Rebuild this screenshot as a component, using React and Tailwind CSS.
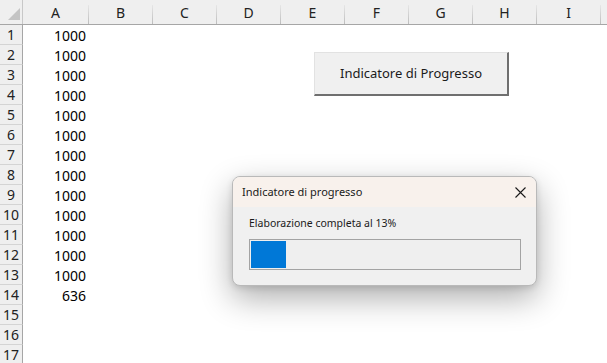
const COLS = [
  { id: 'A', w: 'w-[66px]' },
  { id: 'B', w: 'w-[64px]' },
  { id: 'C', w: 'w-[64px]' },
  { id: 'D', w: 'w-[64px]' },
  { id: 'E', w: 'w-[64px]' },
  { id: 'F', w: 'w-[64px]' },
  { id: 'G', w: 'w-[64px]' },
  { id: 'H', w: 'w-[64px]' },
  { id: 'I', w: 'w-[64px]' },
]

const VALUES = [1000, 1000, 1000, 1000, 1000, 1000, 1000, 1000, 1000, 1000, 1000, 1000, 1000, 636, null, null, null]

const PROGRESS = 13

function ColumnHeader() {
  return (
    <div className="flex h-[25px] bg-[#efefef] border-b border-[#a6a6a6] shrink-0">
      <div className="w-[23px] h-full border-r border-[#c8c8c8] relative shrink-0">
        {/* corner select-all triangle */}
        <svg className="absolute left-[8px] top-[8px]" width="12" height="12" viewBox="0 0 12 12">
          <polygon points="12,0 12,12 0,12" fill="#c4c4c4" />
        </svg>
      </div>
      {COLS.map(c => (
        <div key={c.id} className={`${c.w} h-full flex shrink-0`}>
          <div className="flex-1 flex items-center justify-center text-[14px] text-[#222] pt-[1px]">{c.id}</div>
          <div className="w-px mt-[5px] bg-gradient-to-b from-[#e6e6e6] to-[#bdbdbd]" />
        </div>
      ))}
      <div className="flex-1" />
    </div>
  )
}

function Row({ n, value }) {
  return (
    <div className="flex h-[20px] shrink-0">
      <div className="w-[23px] h-full bg-[#efefef] border-r border-b border-r-[#a6a6a6] border-b-[#d4d4d4] flex items-center justify-center text-[14px] text-[#222] shrink-0">
        {n}
      </div>
      <div className="w-[66px] h-full flex items-center justify-end pr-[3px] text-[14px] text-black shrink-0">
        {value}
      </div>
      <div className="flex-1" />
    </div>
  )
}

function MacroButton() {
  return (
    <button className="absolute left-[314px] top-[52px] w-[195px] h-[44px] bg-[#f0f0f0] border-t border-l border-[#e2e2e2] border-r-2 border-b-2 border-r-[#6f6f6f] border-b-[#6f6f6f] text-[13px] text-[#1b1b1b] flex items-center justify-center">
      Indicatore di Progresso
    </button>
  )
}

function ProgressDialog() {
  return (
    <div className="absolute left-[232px] top-[176px] w-[305px] h-[110px] rounded-[8px] border border-[#b9b9b9] bg-[#f0f0f0] overflow-hidden shadow-[0_12px_32px_rgba(0,0,0,0.32),0_2px_6px_rgba(0,0,0,0.12)] flex flex-col">
      <div className="h-[30px] bg-[#f8f1ec] flex items-center justify-between pl-[9px] pr-[10px] shrink-0">
        <span className="text-[11px] text-[#1a1a1a]">Indicatore di progresso</span>
        <svg width="11" height="11" viewBox="0 0 11 11" className="mt-[1px]">
          <path d="M0.5 0.5 L10.5 10.5 M10.5 0.5 L0.5 10.5" stroke="#1a1a1a" strokeWidth="1.1" />
        </svg>
      </div>
      <div className="flex-1 flex flex-col pl-[16px] pr-[16px] pt-[8px]">
        <div className="text-[10.5px] text-[#1a1a1a] leading-[16px]">Elaborazione completa al {PROGRESS}%</div>
        <div className="mt-[8px] h-[31px] w-[272px] border border-[#a3a3a3] bg-[#efefef] p-[1px]">
          <div className="h-full bg-[#0078d7]" style={{ width: '35px' }} />
        </div>
      </div>
    </div>
  )
}

export default function App() {
  return (
    <div className="relative w-[607px] h-[363px] overflow-hidden bg-white flex flex-col font-['Noto_Sans',sans-serif]">
      <ColumnHeader />
      {VALUES.map((v, i) => (
        <Row key={i} n={i + 1} value={v} />
      ))}
      <MacroButton />
      <ProgressDialog />
    </div>
  )
}
